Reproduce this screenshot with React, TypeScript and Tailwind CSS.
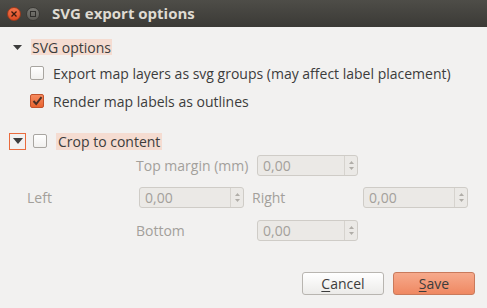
import React from "react";

const font = { fontFamily: '"Open Sans", "DejaVu Sans", sans-serif' };

function Spin({ w }: { w: string }) {
  return (
    <div className={`${w} h-[21px] flex rounded-[3px] border border-[#cfccc7] bg-[#ebe9e6]`}>
      <div className="flex-1 flex items-center pl-[5px] text-[14px] text-[#a3a09b]">0,00</div>
      <div className="w-[13px] border-l border-[#d6d3ce] flex flex-col items-center justify-center gap-[3px]">
        <svg width="5" height="3" viewBox="0 0 5 3"><path d="M0 3 L2.5 0 L5 3Z" fill="#b0ada8" /></svg>
        <svg width="5" height="3" viewBox="0 0 5 3"><path d="M0 0 L2.5 3 L5 0Z" fill="#b0ada8" /></svg>
      </div>
    </div>
  );
}

function Box({ checked }: { checked?: boolean }) {
  if (checked)
    return (
      <div className="w-[14px] h-[14px] rounded-[2px] border border-[#c2522c] bg-gradient-to-b from-[#f68a5e] to-[#e9642f] flex items-center justify-center">
        <svg width="11" height="10" viewBox="0 0 11 10"><path d="M1.5 5 L4.2 8 L9.5 1.2" stroke="#4a3027" strokeWidth="2" fill="none" /></svg>
      </div>
    );
  return <div className="w-[14px] h-[14px] rounded-[2px] border border-[#a8a5a0] bg-gradient-to-b from-white to-[#f1f0ee]" />;
}

const Tri = ({ w = 9, h = 5 }: { w?: number; h?: number }) => (
  <svg width={w} height={h} viewBox={`0 0 ${w} ${h}`}><path d={`M0 0 H${w} L${w / 2} ${h}Z`} fill="#3c3c3c" /></svg>
);

export default function App() {
  return (
    <div className="w-[487px] h-[308px] bg-[#f2f1f0] flex flex-col text-[#3c3c3c]" style={font}>
      <div className="h-[27px] bg-gradient-to-b from-[#4e4d48] to-[#3b3a36] flex items-center pl-[7px]">
        <div className="w-[14px] h-[14px] rounded-full bg-gradient-to-b from-[#f3734a] to-[#de4b22] border border-[#9e3a1c] flex items-center justify-center">
          <svg width="6" height="6" viewBox="0 0 6 6"><path d="M0.5 0.5 L5.5 5.5 M5.5 0.5 L0.5 5.5" stroke="#3b1a0e" strokeWidth="1.3" /></svg>
        </div>
        <div className="ml-[5px] w-[14px] h-[14px] rounded-full bg-gradient-to-b from-[#7a7974] to-[#5d5c57] border border-[#3a3935] flex items-center justify-center">
          <div className="w-[6px] h-[6px] border border-[#2f2e2b]" />
        </div>
        <div className="ml-[12px] text-[15px] font-bold text-[#dfdbd2]">SVG export options</div>
      </div>

      <div className="mt-[10px] h-[20px] flex items-center pl-[13px] text-[14px]">
        <Tri />
        <div className="ml-[9px] h-[16px] px-[1px] flex items-center bg-[#f5dcd1]">SVG options</div>
      </div>

      <div className="mt-[6px] h-[20px] flex items-center pl-[30px] text-[14px]">
        <Box />
        <span className="ml-[9px]">Export map layers as svg groups (may affect label placement)</span>
      </div>
      <div className="mt-[8px] h-[20px] flex items-center pl-[30px] text-[14px]">
        <Box checked />
        <span className="ml-[9px]">Render map labels as outlines</span>
      </div>

      <div className="mt-[20px] h-[20px] flex items-center pl-[9px] text-[14px]">
        <div className="w-[17px] h-[17px] border border-[#ea6b3d] flex items-center justify-center">
          <Tri w={10} h={6} />
        </div>
        <div className="ml-[7px]"><Box /></div>
        <div className="ml-[9px] h-[17px] px-[2px] flex items-center bg-[#f5dcd1]">Crop to content</div>
      </div>

      <div className="mt-[4px] flex flex-col text-[14px] text-[#a3a09b]">
        <div className="h-[21px] flex items-center pl-[136px]">
          <div className="w-[121px]">Top margin (mm)</div>
          <Spin w="w-[101px]" />
        </div>
        <div className="mt-[11px] h-[21px] flex items-center pl-[27px]">
          <div className="w-[112px]">Left</div>
          <Spin w="w-[105px]" />
          <div className="ml-[8px] w-[111px]">Right</div>
          <Spin w="w-[105px]" />
        </div>
        <div className="mt-[12px] h-[21px] flex items-center pl-[136px]">
          <div className="w-[121px]">Bottom</div>
          <Spin w="w-[101px]" />
        </div>
      </div>

      <div className="mt-[31px] flex justify-end pr-[12px] gap-[9px] text-[14px]">
        <button className="w-[82px] h-[23px] rounded-[3px] border border-[#b8b5b0] bg-gradient-to-b from-white to-[#ecebe9] text-[#3c3c3c]">
          <span className="underline underline-offset-2">C</span>ancel
        </button>
        <button className="w-[82px] h-[23px] rounded-[3px] border border-[#c97a5c] bg-gradient-to-b from-[#f6aa8c] to-[#ef8862] text-[#3c3c3c]">
          <span className="underline underline-offset-2">S</span>ave
        </button>
      </div>
    </div>
  );
}
